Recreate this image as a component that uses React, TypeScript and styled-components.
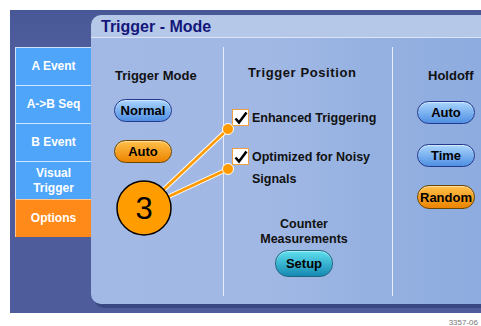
import React from "react";
import styled, {createGlobalStyle} from "styled-components";

const GlobalStyle = createGlobalStyle`
  html, body {
    margin: 0;
    padding: 0;
    background: #fff;
    overflow: hidden;
  }
  body {
    font-family: "Liberation Sans", Arial, sans-serif;
  }
`

const Page = styled.div`
  position: relative;
  width: 481px;
  height: 326px;
  overflow: hidden;
`

const Frame = styled.div`
  margin: 10px 0 0 10px;
  width: 471px;
  height: 303px;
  background: linear-gradient(180deg, #485896 0%, #4e5c9c 12%, #4e5c9c 100%);
  display: flex;
  align-items: flex-start;
`

const Sidebar = styled.div`
  margin: 37px 0 0 5px;
  width: 76px;
  display: flex;
  flex-direction: column;
  flex-shrink: 0;
`

const Tab = styled.div<{$active?: boolean}>`
  height: 38px;
  box-sizing: border-box;
  border-top: 1px solid ${p => p.$active ? "#ffc890" : "#cfe4ff"};
  border-left: 1px solid ${p => p.$active ? "#ffc890" : "#cfe4ff"};
  background: ${p => p.$active ? "#ff8a1a" : "#4ea5f9"};
  color: #fff;
  font-weight: 700;
  font-size: 12px;
  line-height: 15px;
  display: flex;
  align-items: center;
  justify-content: center;
  text-align: center;
`

const Panel = styled.div`
  margin-top: 5px;
  flex: 1;
  min-width: 400px;
  height: 289px;
  border-radius: 10px 0 0 10px;
  overflow: hidden;
  box-shadow: 3px 4px 0 #3b4781;
  display: flex;
  flex-direction: column;
`

const TitleBar = styled.div`
  height: 22px;
  background: #b5c8e8;
  border-bottom: 1px solid #dbe5f5;
  color: #14167a;
  font-weight: 700;
  font-size: 16px;
  line-height: 23px;
  padding-left: 10px;
`

const Body = styled.div`
  flex: 1;
  display: flex;
  padding: 9px 0 8px;
  background: linear-gradient(90deg, #a3b9e5 0%, #a1b8e4 45%, #95b1e1 70%, #8dabdf 100%);
`

const Column = styled.div<{$width?: number; $pad?: number}>`
  width: ${p => p.$width ? `${p.$width}px` : "auto"};
  flex: ${p => p.$width ? "none" : 1};
  padding-left: ${p => p.$pad ?? 0}px;
  box-sizing: border-box;
  display: flex;
  flex-direction: column;
  align-items: flex-start;
`

const Divider = styled.div`
  width: 1px;
  background: #e6edf8;
`

const Heading = styled.div<{$top: number; $left?: number; $spread?: number}>`
  margin-top: ${p => p.$top}px;
  margin-left: ${p => p.$left ?? 0}px;
  font-size: 13px;
  line-height: 15px;
  font-weight: 700;
  letter-spacing: ${p => p.$spread ?? 0}px;
  color: #111;
`

const tones = {
  blue: {top: "#a9d5fd", bottom: "#4f8fe2", border: "#24388c"},
  orange: {top: "#ffc04a", bottom: "#ec8400", border: "#6b4600"},
  teal: {top: "#5ee0ef", bottom: "#1688b2", border: "#1d6682"},
}

const Pill = styled.div<{$tone: keyof typeof tones; $top: number; $h?: number}>`
  margin-top: ${p => p.$top}px;
  width: 58px;
  height: ${p => p.$h ?? 23}px;
  box-sizing: border-box;
  border-radius: 13px;
  border: 1.5px solid ${p => tones[p.$tone].border};
  background: linear-gradient(180deg, ${p => tones[p.$tone].top} 0%, ${p => tones[p.$tone].bottom} 100%);
  box-shadow: inset 0 1px 1px rgba(255,255,255,0.5);
  color: #000;
  font-size: 13px;
  font-weight: 700;
  display: flex;
  align-items: center;
  justify-content: center;
`

const CheckRow = styled.div<{$top: number}>`
  margin: ${p => p.$top}px 0 0 8px;
  display: flex;
  align-items: flex-start;
  gap: 3px;
`

const Box = styled.div`
  margin-top: 2px;
  width: 17px;
  height: 17px;
  box-sizing: border-box;
  border: 1.5px solid #f0a040;
  background: #fff;
  flex-shrink: 0;
  display: flex;
  align-items: center;
  justify-content: center;
`

const CheckLabel = styled.div`
  font-size: 12.5px;
  font-weight: 700;
  line-height: 22px;
  color: #111;
  width: 140px;
`

const Counter = styled.div`
  margin-top: 27px;
  align-self: stretch;
  padding-right: 8px;
  display: flex;
  flex-direction: column;
  align-items: center;
`

const CounterText = styled.div`
  font-size: 12.5px;
  font-weight: 700;
  line-height: 15px;
  color: #111;
  text-align: center;
`

const Callout = styled.svg`
  position: absolute;
  left: 0;
  top: 0;
  pointer-events: none;
`

const Footnote = styled.div`
  margin-top: 5px;
  text-align: right;
  font-size: 8px;
  line-height: 9px;
  color: #777;
  padding-right: 3px;
`

const Check = () => (
  <svg width="14" height="14" viewBox="0 0 14 14">
    <path d="M1.5 7.5 L5 11.5 L12.5 1.5" fill="none" stroke="#000" strokeWidth="2.6" />
  </svg>
)

const dots = [
  {x: 228, y: 129},
  {x: 228, y: 169},
]

function App() {
  return (
    <Page>
      <GlobalStyle />
      <Frame>
        <Sidebar>
          <Tab>A Event</Tab>
          <Tab>A-&gt;B Seq</Tab>
          <Tab>B Event</Tab>
          <Tab>Visual<br />Trigger</Tab>
          <Tab $active>Options</Tab>
        </Sidebar>
        <Panel>
          <TitleBar>Trigger - Mode</TitleBar>
          <Body>
            <Column $width={132} $pad={23}>
              <Heading $top={21} $left={1}>Trigger Mode</Heading>
              <Pill $tone="blue" $top={16}>Normal</Pill>
              <Pill $tone="orange" $top={18}>Auto</Pill>
            </Column>
            <Divider />
            <Column $width={168}>
              <Heading $top={18} $left={24} $spread={0.6}>Trigger Position</Heading>
              <CheckRow $top={27}>
                <Box><Check /></Box>
                <CheckLabel>Enhanced Triggering</CheckLabel>
              </CheckRow>
              <CheckRow $top={17}>
                <Box><Check /></Box>
                <CheckLabel>Optimized for Noisy Signals</CheckLabel>
              </CheckRow>
              <Counter>
                <CounterText>Counter<br />Measurements</CounterText>
                <Pill $tone="teal" $top={3} $h={27}>Setup</Pill>
              </Counter>
            </Column>
            <Divider />
            <Column $pad={24}>
              <Heading $top={21} $left={11}>Holdoff</Heading>
              <Pill $tone="blue" $top={18}>Auto</Pill>
              <Pill $tone="blue" $top={20}>Time</Pill>
              <Pill $tone="orange" $top={18} $h={24}>Random</Pill>
            </Column>
          </Body>
        </Panel>
      </Frame>
      <Footnote>3357-06</Footnote>
      <Callout width="481" height="326" viewBox="0 0 481 326">
        {dots.map(d => (
          <line key={`w${d.y}`} x1={144} y1={208} x2={d.x} y2={d.y} stroke="#fff" strokeWidth="4.5" />
        ))}
        {dots.map(d => (
          <line key={`o${d.y}`} x1={144} y1={208} x2={d.x} y2={d.y} stroke="#ff9a00" strokeWidth="2.6" />
        ))}
        {dots.map(d => (
          <circle key={`c${d.y}`} cx={d.x} cy={d.y} r="5.5" fill="#ff9a00" stroke="#fff" strokeWidth="1" />
        ))}
        <circle cx="144" cy="208" r="27" fill="#ff9c00" stroke="#000" strokeWidth="1.5" />
        <text x="144" y="219" textAnchor="middle" fontSize="31" fontFamily="Liberation Sans, Arial, sans-serif" fill="#000">3</text>
      </Callout>
    </Page>
  );
}

export default App;
